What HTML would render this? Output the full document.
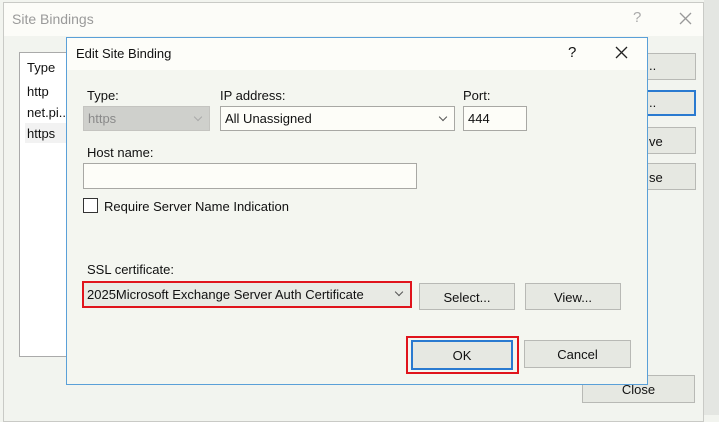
<!DOCTYPE html>
<html><head><style>
*{box-sizing:border-box;margin:0;padding:0}
body{width:719px;height:415px;background:#f2f4ef;font-family:"Liberation Sans",sans-serif;font-size:13px;color:#111;position:relative;overflow:hidden}
.a{position:absolute}
.btn{position:absolute;background:#e6e8e2;border:1px solid #b8b9b5;text-align:center;font-size:13px}
.inp{position:absolute;background:#fdfdf8;border:1px solid #a8a8a4;padding-left:4px;font-size:13px}
.chev{position:absolute;right:8px;top:6px;width:6px;height:6px;border-right:1px solid #555;border-bottom:1px solid #555;transform:rotate(45deg)}
</style></head><body>
<div class="a" style="left:704px;top:0;width:15px;height:415px;background:#e4e6e2"></div>
<div class="a" style="left:3px;top:2px;width:701px;height:420px;border:1px solid #c9cac6;background:#f2f4ef"></div>
<div class="a" style="left:4px;top:3px;width:699px;height:33px;background:#fcfcf8"></div>
<div class="a" style="left:12px;top:11px;color:#9a9a9a;font-size:14px">Site Bindings</div>
<div class="a" style="left:633px;top:9px;color:#aaa;font-size:15px">?</div>
<svg class="a" style="left:679px;top:12px" width="13" height="13"><path d="M1 1L12 12M12 1L1 12" stroke="#999" stroke-width="1.3"/></svg>
<div class="a" style="left:19px;top:52px;width:60px;height:305px;background:#fff;border:1px solid #aaa"></div>
<div class="a" style="left:27px;top:60px;font-size:13px">Type</div>
<div class="a" style="left:27px;top:84px">http</div>
<div class="a" style="left:27px;top:105px">net.pi..</div>
<div class="a" style="left:25px;top:123px;width:41px;height:20px;background:#f2f2f2"></div>
<div class="a" style="left:27px;top:126px">https</div>
<div class="btn" style="left:640px;top:53px;width:56px;height:27px;text-align:left;padding:4px 0 0 8px">..</div>
<div class="btn" style="left:640px;top:90px;width:56px;height:26px;border:2px solid #2a7ad0;text-align:left;padding:3px 0 0 7px">..</div>
<div class="btn" style="left:640px;top:127px;width:56px;height:27px;text-align:left;padding:6px 0 0 8px">ve</div>
<div class="btn" style="left:640px;top:163px;width:56px;height:27px;text-align:left;padding:6px 0 0 8px">se</div>
<div class="btn" style="left:582px;top:375px;width:113px;height:28px;padding-top:6px">Close</div>

<div class="a" style="left:66px;top:37px;width:582px;height:348px;border:1px solid #5aa0d8;background:#f4f6f0"></div>
<div class="a" style="left:67px;top:38px;width:580px;height:32px;background:#fdfdf9"></div>
<div class="a" style="left:76px;top:46px;font-size:13px">Edit Site Binding</div>
<div class="a" style="left:568px;top:44px;font-size:15px">?</div>
<svg class="a" style="left:615px;top:46px" width="13" height="13"><path d="M1 1L12 12M12 1L1 12" stroke="#222" stroke-width="1.3"/></svg>

<div class="a" style="left:87px;top:88px">Type:</div>
<div class="inp" style="left:83px;top:106px;width:127px;height:25px;background:#cfd0cc;border-color:#c4c4c0;color:#8a8a8a;padding-top:4px">https<span class="chev" style="border-color:#aaa;top:7px"></span></div>
<div class="a" style="left:220px;top:88px">IP address:</div>
<div class="inp" style="left:220px;top:106px;width:235px;height:25px;padding-top:4px">All Unassigned<span class="chev" style="top:7px"></span></div>
<div class="a" style="left:463px;top:88px">Port:</div>
<div class="inp" style="left:463px;top:106px;width:64px;height:25px;padding-top:4px">444</div>
<div class="a" style="left:87px;top:145px">Host name:</div>
<div class="inp" style="left:83px;top:163px;width:334px;height:26px"></div>
<div class="a" style="left:83px;top:198px;width:15px;height:15px;border:1px solid #333;background:#fff"></div>
<div class="a" style="left:104px;top:199px">Require Server Name Indication</div>
<div class="a" style="left:87px;top:262px">SSL certificate:</div>
<div class="a" style="left:82px;top:281px;width:330px;height:27px;border:2px solid #e0141c;background:#e8eae4"></div>
<div class="a" style="left:87px;top:287px">2025Microsoft Exchange Server Auth Certificate</div>
<div class="chev" style="left:396px;top:289px;right:auto"></div>
<div class="btn" style="left:419px;top:283px;width:96px;height:27px;padding-top:6px">Select...</div>
<div class="btn" style="left:525px;top:283px;width:96px;height:27px;padding-top:6px">View...</div>
<div class="a" style="left:406px;top:336px;width:113px;height:38px;border:2px solid #e0141c"></div>
<div class="btn" style="left:411px;top:340px;width:102px;height:30px;border:2px solid #2a7ad0;padding-top:6px">OK</div>
<div class="btn" style="left:524px;top:340px;width:107px;height:28px;padding-top:6px">Cancel</div>
</body></html>
